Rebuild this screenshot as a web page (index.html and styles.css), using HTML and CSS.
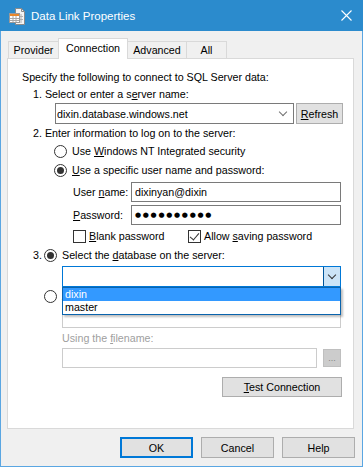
FILE: index.html
```html
<!DOCTYPE html>
<html lang="en">
<head>
  <meta charset="UTF-8" />
  <title>Data Link Properties</title>
  <link rel="stylesheet" href="styles.css">
</head>
<body>
  <div class="window">
    <!-- Title bar -->
    <div class="titlebar">
      <svg class="app-icon" width="16" height="17" viewBox="0 0 16 17">
        <path d="M6.5 0.5h6l3 3v13h-9z" fill="#f4f4f4" stroke="#8a8a8a"/>
        <path d="M12.5 0.5v3h3" fill="none" stroke="#8a8a8a"/>
        <path d="M9 6v9M12 6v9M8 8.5h6M8 11.5h6" stroke="#b0b0b0"/>
        <rect x="0.5" y="5.5" width="10" height="9" fill="#fff" stroke="#9a9a9a"/>
        <rect x="1" y="6" width="9" height="2" fill="#e8882c"/>
        <path d="M1 10.5h9M1 12.5h9M4 8v6M7 8v6" stroke="#a8a8a8"/>
      </svg>
      <div class="title">Data Link Properties</div>
      <svg class="close" width="11" height="11" viewBox="0 0 11 11">
        <path d="M0.5 0.5l10 10M10.5 0.5l-10 10" stroke="#fff" stroke-width="1.1"/>
      </svg>
    </div>

    <!-- Tabs -->
    <div class="tabs">
      <div class="tab tab-provider">Provider</div>
      <div class="tab tab-connection active">Connection</div>
      <div class="tab tab-advanced">Advanced</div>
      <div class="tab tab-all">All</div>
    </div>

    <!-- Connection page -->
    <div class="pane">
      <div class="row intro">Specify the following to connect to SQL Server data:</div>
      <div class="row step"><span>1. Select or enter a s<u>e</u>rver name:</span></div>
      <div class="row server-row">
        <div class="combo server-combo">
          <span class="value">dixin.database.windows.net</span>
          <span class="chevron"></span>
        </div>
        <div class="btn refresh"><span><u>R</u>efresh</span></div>
      </div>
      <div class="row step step-2">2. Enter information to log on to the server:</div>
      <div class="row option opt-nt">
        <span class="radio"></span><span>Use <u>W</u>indows NT Integrated security</span>
      </div>
      <div class="row option opt-user">
        <span class="radio checked"></span><span><u>U</u>se a specific user name and password:</span>
      </div>
      <div class="row field field-user">
        <span class="label">User <u>n</u>ame:</span>
        <div class="textbox">dixinyan@dixin</div>
      </div>
      <div class="row field field-pass">
        <span class="label"><u>P</u>assword:</span>
        <div class="textbox dots">●●●●●●●●●●</div>
      </div>
      <div class="row checks">
        <span class="check-item check-blank"><span class="checkbox"></span><span><u>B</u>lank password</span></span>
        <span class="check-item"><span class="checkbox checked"></span><span>Allow <u>s</u>aving password</span></span>
      </div>
      <div class="row step-3">
        <span class="num">3.</span><span class="radio checked"></span><span>Select the <u>d</u>atabase on the server:</span>
      </div>
      <div class="row db-row">
        <div class="combo db-combo">
          <span class="value"></span>
          <span class="drop-btn"><span class="chevron dark"></span></span>
        </div>
        <!-- open dropdown list -->
        <div class="dropdown">
          <div class="item selected">dixin</div>
          <div class="item">master</div>
        </div>
      </div>
      <div class="row attach">
        <span class="radio"></span><span>Attach a database file as a database name:</span>
      </div>
      <div class="row disabled-box">
        <div class="textbox off wide"></div>
      </div>
      <div class="row muted"><span>Using the <u>f</u>ilename:</span></div>
      <div class="row file-row">
        <div class="textbox off file"></div>
        <div class="btn browse off">...</div>
      </div>
      <div class="row test-row">
        <div class="btn test"><span><u>T</u>est Connection</span></div>
      </div>
    </div>

    <!-- Dialog buttons -->
    <div class="buttons">
      <div class="btn dlg default">OK</div>
      <div class="btn dlg">Cancel</div>
      <div class="btn dlg">Help</div>
    </div>
  </div>
</body>
</html>
```

FILE: styles.css
```css
/* Classic Windows 10 dialog */
body {
  margin: 0;
  font-family: "Liberation Sans", Arial, sans-serif;
  font-size: 10.7px;
  color: #000;
  background: #fff;
}
.window {
  width: 363px;
  height: 467px;
  box-sizing: border-box;
  border: 1px solid #5aa6e2;
  border-top: none;
  background: #f0f0f0;
}
/* Title bar */
.titlebar {
  height: 31px;
  margin: 0 -1px;
  background: #2b8bcd;
  color: #fff;
  display: flex;
  align-items: center;
}
.app-icon {
  margin-left: 9px;
  margin-top: 1px;
}
.title {
  margin-left: 6px;
  font-size: 11.5px;
  flex: 1;
}
.close {
  margin-right: 11px;
}
/* Tabs */
.tabs {
  display: flex;
  align-items: flex-end;
  height: 20px;
  margin-top: 7px;
  padding-left: 7px;
}
.tab {
  box-sizing: border-box;
  height: 17px;
  line-height: 16px;
  border: 1px solid #d9d9d9;
  border-bottom: none;
  margin-right: -1px;
  text-align: center;
  background: #f0f0f0;
}
.tab-provider { width: 51px; }
.tab-connection { width: 70px; }
.tab-advanced { width: 60px; }
.tab-all { width: 41px; }
.tab.active {
  height: 21px;
  line-height: 18px;
  margin-bottom: -1px;
  background: #fff;
  position: relative;
  z-index: 1;
}
/* Page */
.pane {
  box-sizing: border-box;
  width: 347px;
  height: 371px;
  margin-left: 6px;
  padding-top: 10px;
  border: 1px solid #d9d9d9;
  background: #fff;
}
.row {
  height: 16px;
  line-height: 16px;
  white-space: nowrap;
  display: flex;
  align-items: center;
}
.intro { margin-left: 14px; }
.step { margin-left: 25px; margin-top: 1px; }
.step-2 { margin-top: 1px; }
.server-row {
  height: 21px;
  margin: 1px 0 0 47px;
}
.option {
  margin-left: 46px;
  margin-top: 2px;
}
.opt-user { margin-top: 3px; }
.field {
  height: 20px;
  margin: 4px 0 0 65px;
}
.field-pass { margin-top: 3px; }
.field .label { width: 58px; }
.checks {
  margin: 3px 0 0 65px;
}
.check-item {
  display: flex;
  align-items: center;
}
.check-blank { width: 115px; }
.step-3 {
  margin: 3px 0 0 25px;
}
.step-3 .num { width: 11px; }
.db-row {
  height: 21px;
  margin: 3px 0 0 54px;
  position: relative;
}
.attach {
  margin: 1px 0 0 36px;
}
.disabled-box {
  height: 20px;
  margin: 4px 0 0 54px;
}
.muted {
  color: #a0a0a0;
  margin: 2px 0 0 54px;
}
.file-row {
  height: 20px;
  margin: 2px 0 0 54px;
}
.test-row {
  height: 20px;
  margin: 9px 0 0 214px;
}
/* Controls */
.radio {
  box-sizing: border-box;
  width: 13px;
  height: 13px;
  border: 1px solid #333;
  border-radius: 50%;
  margin-right: 5px;
  display: inline-flex;
  align-items: center;
  justify-content: center;
  background: #fff;
}
.radio.checked::after {
  content: "";
  width: 7px;
  height: 7px;
  border-radius: 50%;
  background: #333;
}
.checkbox {
  box-sizing: border-box;
  width: 13px;
  height: 13px;
  border: 1px solid #333;
  margin-right: 3px;
  background: #fff;
  position: relative;
}
.checkbox.checked::after {
  content: "";
  position: absolute;
  left: 3px;
  top: 0px;
  width: 4px;
  height: 8px;
  border: solid #333;
  border-width: 0 1px 1px 0;
  transform: rotate(40deg);
}
.combo {
  box-sizing: border-box;
  height: 21px;
  border: 1px solid #7a7a7a;
  background: #fff;
  display: flex;
  align-items: center;
  padding-left: 1px;
}
.combo .value { flex: 1; }
.server-combo { width: 239px; }
.chevron {
  width: 5px;
  height: 5px;
  border: solid #707070;
  border-width: 0 1px 1px 0;
  transform: rotate(45deg);
  margin: -3px 7px 0 0;
}
.chevron.dark {
  border-color: #333;
  margin: -3px 0 0 0;
}
.db-combo {
  width: 279px;
  border-color: #0078d7;
  padding: 0;
}
.drop-btn {
  box-sizing: border-box;
  width: 17px;
  height: 19px;
  border-left: 1px solid #005499;
  background: #cce4f7;
  display: flex;
  align-items: center;
  justify-content: center;
}
.dropdown {
  position: absolute;
  top: 21px;
  left: 0;
  box-sizing: border-box;
  width: 279px;
  border: 1px solid #0a64ad;
  background: #fff;
  z-index: 2;
  box-shadow: 2px 2px 2px rgba(0, 0, 0, 0.25);
}
.dropdown .item {
  height: 13px;
  line-height: 13px;
  padding-left: 2px;
}
.dropdown .item.selected {
  background: #3399ff;
  color: #fff;
}
.textbox {
  box-sizing: border-box;
  height: 20px;
  width: 210px;
  border: 1px solid #7a7a7a;
  background: #fff;
  padding-left: 3px;
  line-height: 18px;
}
.textbox.dots {
  font-family: "DejaVu Sans", sans-serif;
  font-size: 7px;
  letter-spacing: 1.7px;
  padding-left: 3px;
}
.textbox.off { border-color: #cccccc; }
.textbox.wide { width: 279px; }
.textbox.file { width: 255px; }
.btn {
  box-sizing: border-box;
  border: 1px solid #adadad;
  background: #e1e1e1;
  display: flex;
  align-items: center;
  justify-content: center;
}
.refresh {
  width: 47px;
  height: 21px;
  margin-left: 2px;
}
.browse {
  width: 18px;
  height: 18px;
  margin-left: 6px;
  font-size: 9px;
  color: #838383;
}
.btn.off {
  background: #cccccc;
  border-color: #bfbfbf;
}
.test {
  width: 120px;
  height: 20px;
}
/* Dialog buttons */
.buttons {
  display: flex;
  justify-content: flex-end;
  gap: 8px;
  margin-top: 8px;
  padding-right: 7px;
}
.dlg {
  width: 73px;
  height: 21px;
}
.dlg.default {
  border: 2px solid #0078d7;
}
```
